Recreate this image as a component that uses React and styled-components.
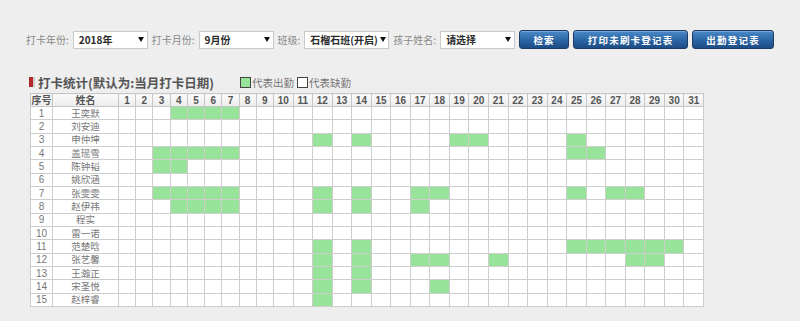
import React from "react";
import styled, { createGlobalStyle } from "styled-components";

const GlobalStyle = createGlobalStyle`
  body {
    margin: 0;
    background: #eeeeee;
    font-family: "Noto Sans CJK SC", "Noto Sans", sans-serif;
  }
`;

const students = [
  { name: "王奕默", days: [4, 5, 6, 7] },
  { name: "刘安迪", days: [] },
  { name: "申仲坤", days: [12, 14, 19, 20, 25] },
  { name: "盖瑶雪", days: [3, 4, 5, 6, 7, 25, 26] },
  { name: "陈钟韬", days: [3, 4] },
  { name: "姚欣涵", days: [] },
  { name: "张雯雯", days: [3, 4, 5, 6, 7, 12, 14, 17, 18, 25, 27, 28] },
  { name: "赵伊祎", days: [4, 5, 6, 7, 12, 14, 17] },
  { name: "程实", days: [] },
  { name: "雷一诺", days: [] },
  { name: "范楚晗", days: [12, 14, 25, 26, 27, 28, 29, 30] },
  { name: "张艺馨", days: [12, 14, 17, 18, 21, 28, 29] },
  { name: "王瀚正", days: [12, 14] },
  { name: "宋圣悦", days: [12, 14, 18] },
  { name: "赵梓睿", days: [12] },
];

const days = Array.from({ length: 31 }, (_, i) => i + 1);

export default function App() {
  return (
    <Page>
      <GlobalStyle />
      <Toolbar>
        <Label>打卡年份:</Label>
        <Select $w={75}>2018年</Select>
        <Label>打卡月份:</Label>
        <Select $w={75}>9月份</Select>
        <Label>班级:</Label>
        <Select $w={85}>石榴石班(开启)</Select>
        <Label>孩子姓名:</Label>
        <Select $w={75}>请选择</Select>
        <Button $w={50}>检索</Button>
        <Button $w={115}>打印未刷卡登记表</Button>
        <Button $w={82}>出勤登记表</Button>
      </Toolbar>

      <TitleRow>
        <Marker />
        <Title>打卡统计(默认为:当月打卡日期)</Title>
        <Legend>
          <Swatch $on />
          代表出勤
          <Swatch />
          代表缺勤
        </Legend>
      </TitleRow>

      <Grid>
        <colgroup>
          <col style={{ width: 22 }} />
          <col style={{ width: 66 }} />
          {days.map((d) => (
            <col key={d} style={{ width: d < 10 ? 17.22 : 19.55 }} />
          ))}
        </colgroup>
        <thead>
          <HeadRow>
            <HeadCell>序号</HeadCell>
            <HeadCell>姓名</HeadCell>
            {days.map((d) => (
              <HeadCell key={d}>{d}</HeadCell>
            ))}
          </HeadRow>
        </thead>
        <tbody>
          {students.map((s, i) => (
            <BodyRow key={s.name}>
              <Cell>{i + 1}</Cell>
              <Cell $name>{s.name}</Cell>
              {days.map((d) => (
                <Cell key={d} $on={s.days.includes(d)} />
              ))}
            </BodyRow>
          ))}
        </tbody>
      </Grid>
    </Page>
  );
}

function Select({ $w, children }) {
  return (
    <SelectBox $w={$w}>
      <span>{children}</span>
      <svg width="6" height="5" viewBox="0 0 6 5">
        <path d="M0 0h6L3 5z" fill="#111" />
      </svg>
    </SelectBox>
  );
}

const Page = styled.div`
  padding: 30px 0 0 26px;
`;

const Toolbar = styled.div`
  display: flex;
  align-items: center;
  height: 19px;
`;

const Label = styled.span`
  font-size: 10px;
  color: #888;
  margin: 0 4px 0 0;
  white-space: nowrap;
`;

const SelectBox = styled.div`
  box-sizing: border-box;
  width: ${(p) => p.$w}px;
  height: 18px;
  margin-right: 4px;
  padding: 0 3px 0 5px;
  display: flex;
  align-items: center;
  justify-content: space-between;
  gap: 2px;
  background: #fff;
  border: 1px solid #c9c9c9;
  font-size: 10px;
  font-weight: bold;
  color: #2a2a2a;
  white-space: nowrap;

  svg {
    flex-shrink: 0;
  }
`;

const Button = styled.button`
  box-sizing: border-box;
  width: ${(p) => p.$w}px;
  height: 19px;
  margin-right: 4px;
  padding: 0;
  border: 1px solid #1b3b63;
  border-radius: 3px;
  background: linear-gradient(#4b89c8, #2b64a3 55%, #1c4c85);
  box-shadow: inset 0 1px 0 rgba(255, 255, 255, 0.25);
  color: #fff;
  font-family: "Noto Sans CJK SC", sans-serif;
  font-size: 9.5px;
  font-weight: bold;
  letter-spacing: 1.2px;
`;

const TitleRow = styled.div`
  display: flex;
  align-items: center;
  height: 16px;
  margin: 25px 0 3px 3px;
`;

const Marker = styled.span`
  width: 4px;
  height: 10px;
  background: #b3282d;
  border-right: 2px solid #cfcfcf;
  margin-right: 3px;
`;

const Title = styled.h2`
  margin: 0;
  font-size: 12.5px;
  font-weight: bold;
  color: #555;
  white-space: nowrap;
`;

const Legend = styled.div`
  display: flex;
  align-items: center;
  margin-left: 26px;
  font-size: 10.5px;
  color: #777;
`;

const Swatch = styled.span`
  box-sizing: border-box;
  width: 11px;
  height: 11px;
  margin: 0 1px 0 3px;
  border: 1px solid #444;
  background: ${(p) => (p.$on ? "#98e39a" : "#fff")};
  &:first-child {
    margin-left: 0;
  }
`;

const Grid = styled.table`
  border-collapse: collapse;
  table-layout: fixed;
  width: 673px;
  margin-left: 4px;
  background: #fff;
`;

const HeadRow = styled.tr`
  height: 13px;
`;

const BodyRow = styled.tr`
  height: 13.33px;
`;

const HeadCell = styled.th`
  padding: 0;
  border: 1px solid #c6c6c6;
  background: linear-gradient(#fbfbfb, #ececec);
  font-family: "Liberation Sans", "Noto Sans CJK SC", sans-serif;
  font-size: 10px;
  font-weight: bold;
  line-height: 11px;
  color: #555;
  text-align: center;
`;

const Cell = styled.td`
  padding: 0;
  border: 1px solid #cdcdcd;
  background: ${(p) => (p.$on ? "#98e39a" : "#fff")};
  font-family: "Liberation Sans", "Noto Sans CJK SC", sans-serif;
  font-size: ${(p) => (p.$name ? "9.5px" : "10px")};
  line-height: 11px;
  color: #777;
  text-align: center;
`;
